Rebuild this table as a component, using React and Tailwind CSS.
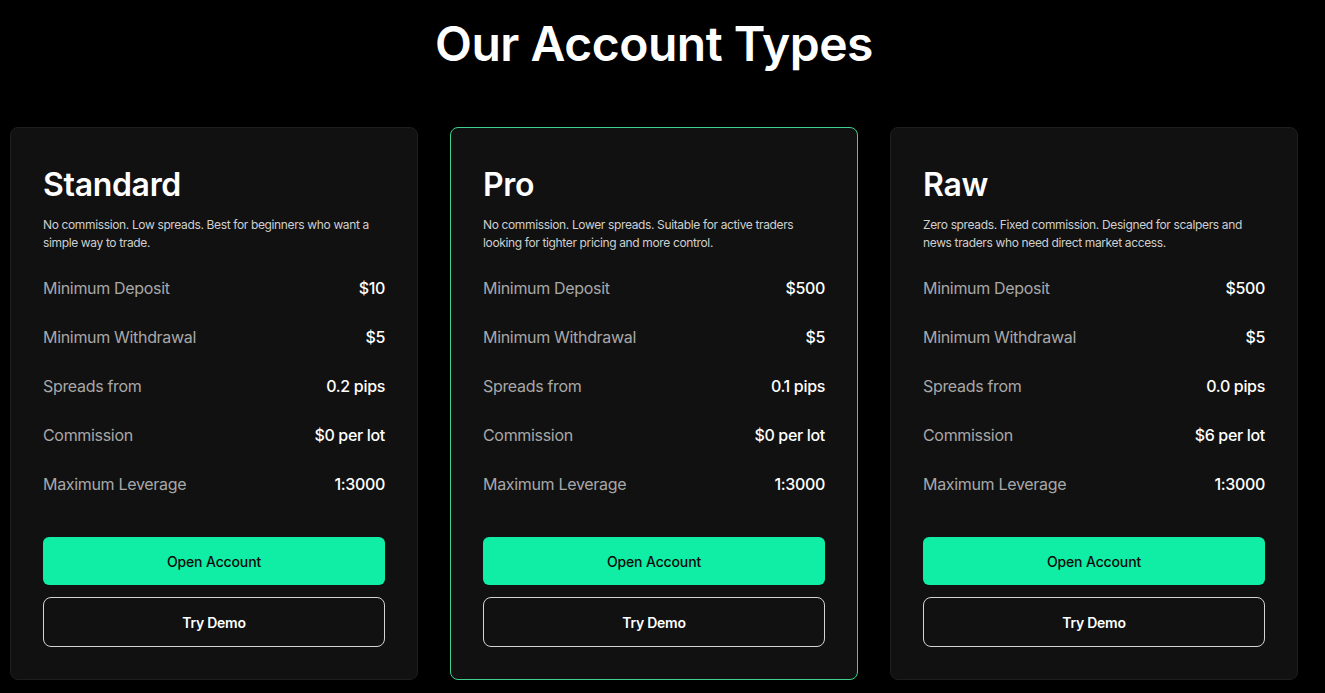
const accounts = [
  {
    name: "Standard",
    desc: "No commission. Low spreads. Best for beginners who want a simple way to trade.",
    rows: [
      ["Minimum Deposit", "$10"],
      ["Minimum Withdrawal", "$5"],
      ["Spreads from", "0.2 pips"],
      ["Commission", "$0 per lot"],
      ["Maximum Leverage", "1:3000"],
    ],
  },
  {
    name: "Pro",
    featured: true,
    desc: "No commission. Lower spreads. Suitable for active traders looking for tighter pricing and more control.",
    rows: [
      ["Minimum Deposit", "$500"],
      ["Minimum Withdrawal", "$5"],
      ["Spreads from", "0.1 pips"],
      ["Commission", "$0 per lot"],
      ["Maximum Leverage", "1:3000"],
    ],
  },
  {
    name: "Raw",
    desc: "Zero spreads. Fixed commission. Designed for scalpers and news traders who need direct market access.",
    rows: [
      ["Minimum Deposit", "$500"],
      ["Minimum Withdrawal", "$5"],
      ["Spreads from", "0.0 pips"],
      ["Commission", "$6 per lot"],
      ["Maximum Leverage", "1:3000"],
    ],
  },
];

function AccountCard({ account }) {
  return (
    <div
      className={`rounded-lg border bg-[#111111] px-8 pt-[37px] pb-8 ${
        account.featured ? "border-[#3fcf8e]" : "border-[#1e1e1e]"
      }`}
    >
      <h3 className="text-[32px] leading-[40px] font-semibold text-white tracking-[-0.01em]">
        {account.name}
      </h3>
      <p className="mt-[11px] text-[12px] leading-[18px] text-[#cfcfcf] tracking-[-0.03em]">
        {account.desc}
      </p>

      <div className="mt-[11px]">
        {account.rows.map(([label, value]) => (
          <div
            key={label}
            className="h-[49px] flex items-center justify-between text-[16px] tracking-[-0.02em]"
          >
            <span className="text-[#a8a8a8]">{label}</span>
            <span className="text-white font-medium">{value}</span>
          </div>
        ))}
      </div>

      <div className="mt-[29px] flex flex-col gap-3">
        <button className="h-12 rounded-md bg-[#10eda4] text-[14px] font-medium text-[#0b0b0b] tracking-[-0.01em]">
          Open Account
        </button>
        <button className="h-[50px] rounded-lg border border-[#d4d4d4] text-[14px] font-semibold text-white tracking-[-0.02em]">
          Try Demo
        </button>
      </div>
    </div>
  );
}

export default function App() {
  return (
    <div
      className="min-h-screen bg-black pb-10"
      style={{ fontFamily: "Inter, 'Noto Sans', sans-serif" }}
    >
      <div className="w-[1308px] px-[10px]">
        <h2 className="pt-5 text-center text-[48px] leading-[48px] font-semibold text-white tracking-[-0.01em]">
          Our Account Types
        </h2>
        <div className="mt-[59px] grid grid-cols-3 gap-8">
          {accounts.map((a) => (
            <AccountCard key={a.name} account={a} />
          ))}
        </div>
      </div>
    </div>
  );
}
